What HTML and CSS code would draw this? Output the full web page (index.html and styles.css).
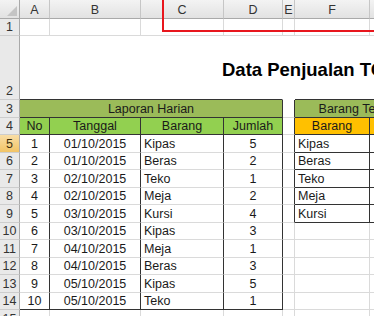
FILE: index.html
```html
<!DOCTYPE html>
<html lang="id">
<head>
    <meta charset="UTF-8">
    <meta name="viewport" content="width=device-width, initial-scale=1.0">
    <title>Data Penjualan</title>
    <link rel="stylesheet" href="styles.css">
</head>
<body>
    <table class="sheet">
        <colgroup>
            <col class="w-rh">
            <col class="w-a">
            <col class="w-b">
            <col class="w-c">
            <col class="w-d">
            <col class="w-e">
            <col class="w-f">
            <col class="w-g">
            <col class="w-h">
        </colgroup>
        <tr class="r-hd">
            <th class="corner">
                <svg width="20" height="18" viewBox="0 0 20 18"><polygon points="17,6 17,16 7,16" fill="#c4c4c4"/></svg>
            </th>
            <th class="ch">A</th>
            <th class="ch">B</th>
            <th class="ch">C</th>
            <th class="ch">D</th>
            <th class="ch">E</th>
            <th class="ch">F</th>
            <th class="ch">G</th>
            <th class="ch">H</th>
        </tr>
        <tr class="r1">
            <th class="rh">1</th>
            <td></td><td></td><td></td><td></td><td></td><td></td><td></td><td></td>
        </tr>
        <tr class="r2">
            <th class="rh">2</th>
            <td colspan="4" class="title bb">Data Penjualan TOKO MAJU</td>
            <td></td>
            <td colspan="2" class="bb"></td>
            <td></td>
        </tr>
        <tr>
            <th class="rh">3</th>
            <td colspan="4" class="grp c br bb">Laporan Harian</td>
            <td class="br"></td>
            <td colspan="2" class="grp c br bb">Barang Terlaris</td>
            <td></td>
        </tr>
        <tr>
            <th class="rh">4</th>
            <td class="hdr c br bb">No</td>
            <td class="hdr c br bb">Tanggal</td>
            <td class="hdr c br bb">Barang</td>
            <td class="hdr c br bb">Jumlah</td>
            <td class="br"></td>
            <td class="hdr2 c br bb">Barang</td>
            <td class="hdr2 c br bb">Jumlah</td>
            <td></td>
        </tr>
        <tr>
            <th class="rh sel">5</th>
            <td class="c br">1</td><td class="c br">01/10/2015</td><td class="l br">Kipas</td><td class="c br">5</td>
            <td class="br"></td>
            <td class="l br bb">Kipas</td><td class="c br bb">13</td>
            <td></td>
        </tr>
        <tr>
            <th class="rh">6</th>
            <td class="c br">2</td><td class="c br">01/10/2015</td><td class="l br">Beras</td><td class="c br">2</td>
            <td class="br"></td>
            <td class="l br bb">Beras</td><td class="c br bb">5</td>
            <td></td>
        </tr>
        <tr>
            <th class="rh">7</th>
            <td class="c br">3</td><td class="c br">02/10/2015</td><td class="l br">Teko</td><td class="c br">1</td>
            <td class="br"></td>
            <td class="l br bb">Teko</td><td class="c br bb">2</td>
            <td></td>
        </tr>
        <tr>
            <th class="rh">8</th>
            <td class="c br">4</td><td class="c br">02/10/2015</td><td class="l br">Meja</td><td class="c br">2</td>
            <td class="br"></td>
            <td class="l br bb">Meja</td><td class="c br bb">3</td>
            <td></td>
        </tr>
        <tr>
            <th class="rh">9</th>
            <td class="c br">5</td><td class="c br">03/10/2015</td><td class="l br">Kursi</td><td class="c br">4</td>
            <td class="br"></td>
            <td class="l br bb">Kursi</td><td class="c br bb">4</td>
            <td></td>
        </tr>
        <tr>
            <th class="rh">10</th>
            <td class="c br">6</td><td class="c br">03/10/2015</td><td class="l br">Kipas</td><td class="c br">3</td>
            <td></td><td></td><td></td><td></td>
        </tr>
        <tr>
            <th class="rh">11</th>
            <td class="c br">7</td><td class="c br">04/10/2015</td><td class="l br">Meja</td><td class="c br">1</td>
            <td></td><td></td><td></td><td></td>
        </tr>
        <tr>
            <th class="rh">12</th>
            <td class="c br">8</td><td class="c br">04/10/2015</td><td class="l br">Beras</td><td class="c br">3</td>
            <td></td><td></td><td></td><td></td>
        </tr>
        <tr>
            <th class="rh">13</th>
            <td class="c br">9</td><td class="c br">05/10/2015</td><td class="l br">Kipas</td><td class="c br">5</td>
            <td></td><td></td><td></td><td></td>
        </tr>
        <tr>
            <th class="rh">14</th>
            <td class="c br bb">10</td><td class="c br bb">05/10/2015</td><td class="l br bb">Teko</td><td class="c br bb">1</td>
            <td></td><td></td><td></td><td></td>
        </tr>
        <tr>
            <th class="rh">15</th>
            <td></td><td></td><td></td><td></td><td></td><td></td><td></td><td></td>
        </tr>
    </table>

    <div class="mark"></div>
</body>
</html>
```

FILE: styles.css
```css
html, body {
    margin: 0;
    padding: 0;
}
body {
    font-family: "Liberation Sans", Arial, sans-serif;
    font-size: 12.5px;
    color: #1a1a1a;
    background: #fff;
    overflow: hidden;
    position: relative;
    height: 316px;
}
.sheet {
    border-collapse: separate;
    border-spacing: 0;
    table-layout: fixed;
    width: 507px;
}
.w-rh { width: 20px; }
.w-a { width: 30px; }
.w-b { width: 91px; }
.w-c { width: 83px; }
.w-d { width: 59px; }
.w-e { width: 12px; }
.w-f { width: 75px; }
.w-g { width: 57px; }
.w-h { width: 80px; }

.sheet th,
.sheet td {
    padding: 0;
    white-space: nowrap;
    overflow: visible;
    vertical-align: bottom;
    line-height: 16px;
    font-weight: normal;
}
.sheet tr {
    height: 17.5px;
}
.sheet tr.r-hd {
    height: 18px;
}
.sheet tr.r1 {
    height: 17px;
}
.sheet tr.r2 {
    height: 64px;
}
.sheet td {
    border-right: 1px solid #dadada;
    border-bottom: 1px solid #dadada;
}

/* headers */
.sheet th.ch {
    background: linear-gradient(#f3f3f3, #e2e2e2);
    border-right: 1px solid #c6c6c6;
    border-bottom: 1px solid #a9a9a9;
    color: #333;
    line-height: 14px;
    padding-bottom: 1px;
    text-align: center;
}
.sheet th.corner {
    background: linear-gradient(#f3f3f3, #e2e2e2);
    border-right: 1px solid #a9a9a9;
    border-bottom: 1px solid #a9a9a9;
    vertical-align: top;
    line-height: 0;
}
.corner svg {
    display: block;
}
.sheet th.rh {
    background: #e9e9e9;
    border-right: 1px solid #a9a9a9;
    border-bottom: 1px solid #cdcdcd;
    color: #333;
    text-align: center;
}
.sheet th.sel {
    background: linear-gradient(#f9dea6, #f2c466);
    color: #3f3111;
}

/* row 2 has a white fill, no gridlines */
.sheet .r2 td {
    border-right-color: #fff;
    border-bottom-color: #fff;
}
.sheet td.br {
    border-right-color: #333;
}
.sheet td.bb {
    border-bottom-color: #333;
}

.sheet td.title {
    vertical-align: top;
    padding: 23px 0 0 202px;
    font-size: 18.5px;
    line-height: 22px;
    font-weight: bold;
    color: #000;
}

.sheet td.c {
    text-align: center;
}
.sheet td.l {
    text-align: left;
    padding-left: 3px;
}
.grp {
    background: #9bbb59;
}
.hdr {
    background: #92d050;
}
.hdr2 {
    background: #ffc000;
}

/* red selection mark drawn over the sheet */
.mark {
    position: absolute;
    left: 162px;
    top: -4px;
    width: 260px;
    height: 36px;
    border: 2px solid #e8161d;
    box-sizing: border-box;
}
```
